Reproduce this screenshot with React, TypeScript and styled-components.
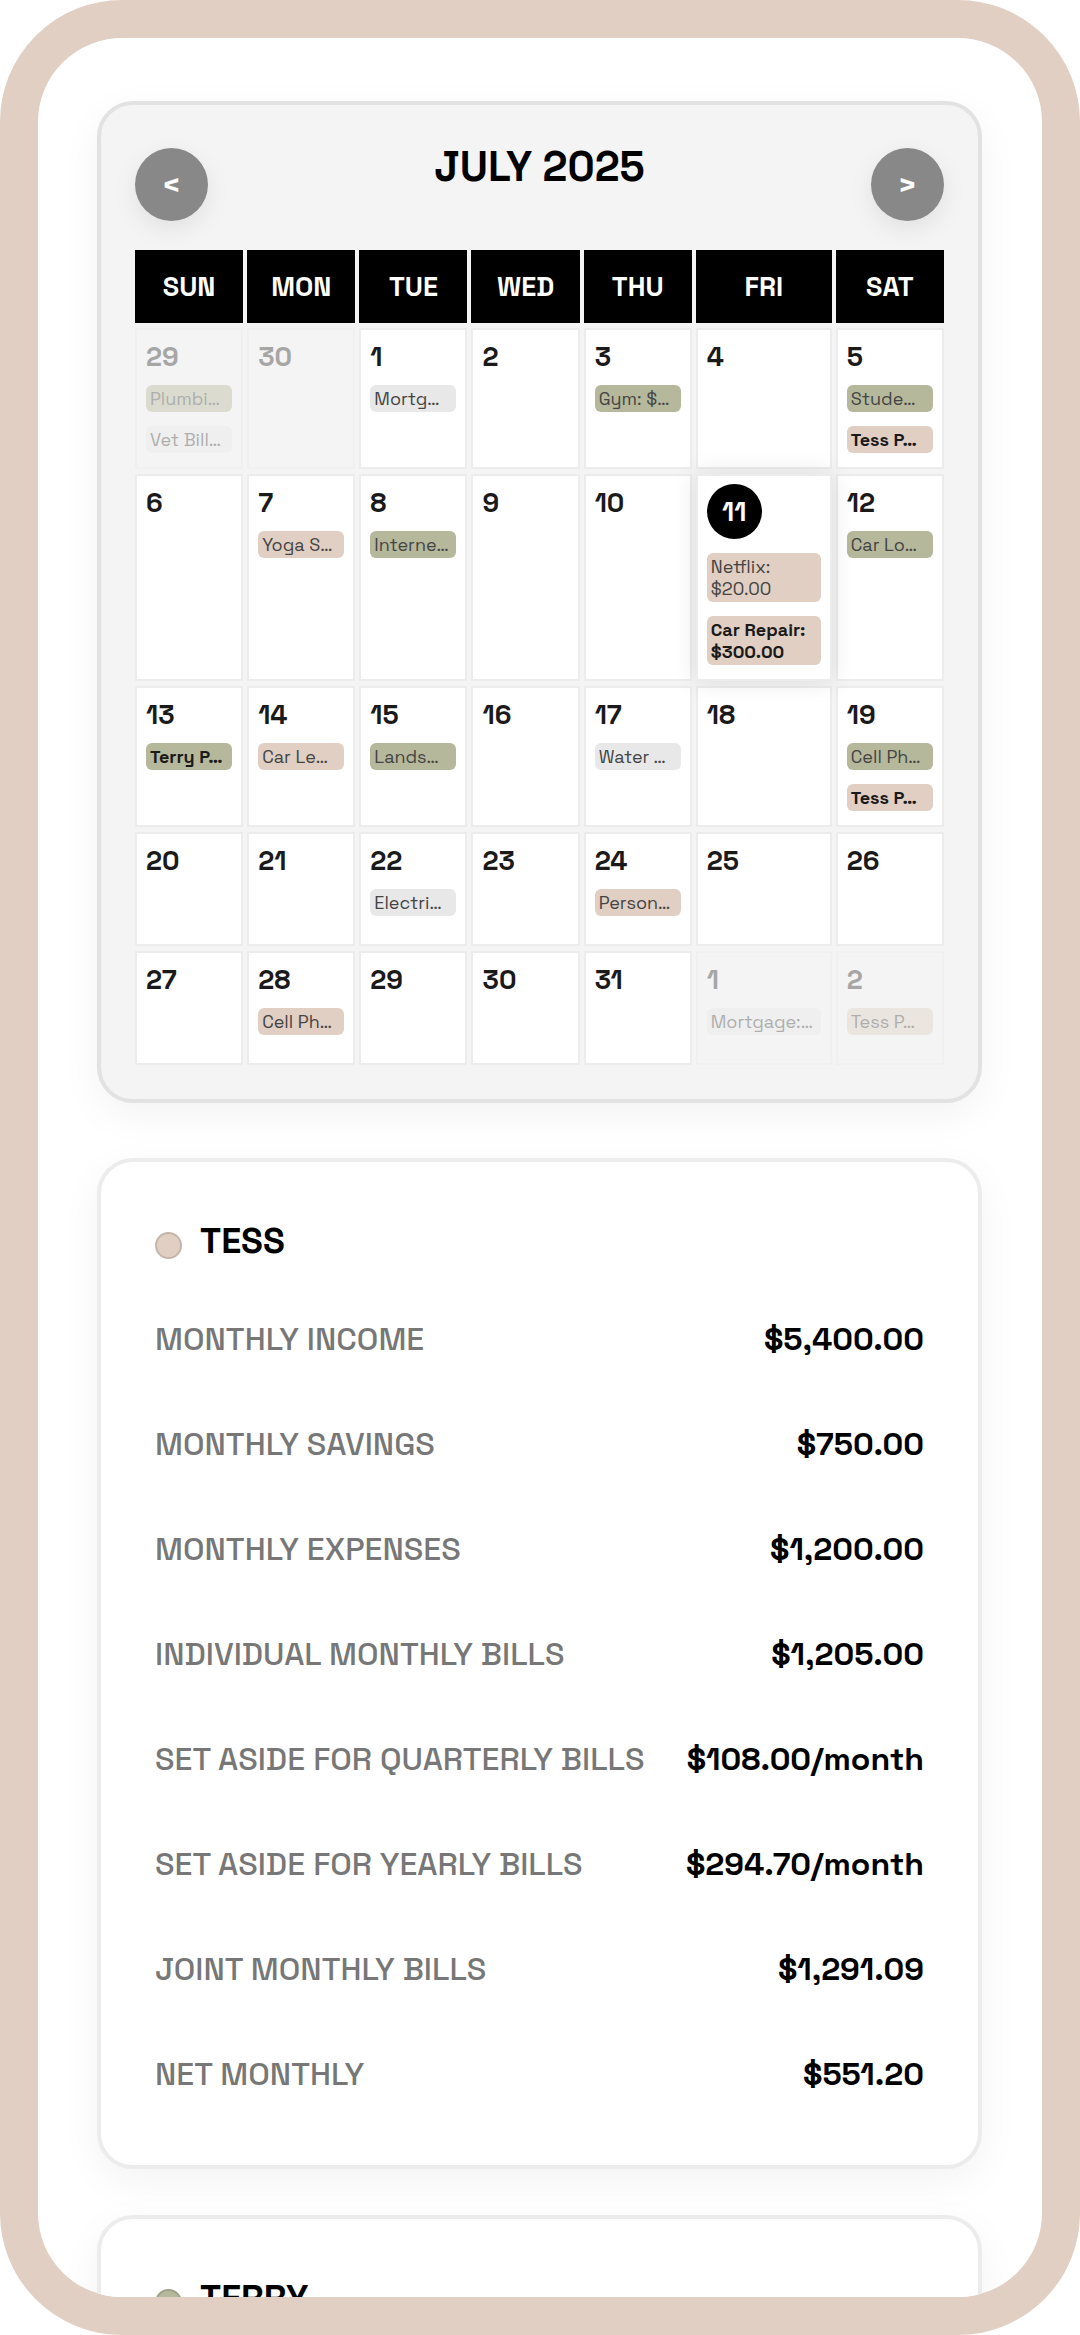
import React from "react";
import styled, { createGlobalStyle, css } from "styled-components";

const GlobalStyle = createGlobalStyle`
  *, *::before, *::after { box-sizing: border-box; }
  body {
    margin: 0;
    background: #ffffff;
    color: #000000;
    font-family: "Space Grotesk", Inter, "Liberation Sans", sans-serif;
  }
`;

type Owner = "tess" | "terry" | "joint";

const ownerColor: Record<Owner, string> = {
  tess: "#e0cfc2",
  terry: "#b6b89b",
  joint: "#e8e8e8",
};

const Frame = styled.div`
  height: 100vh;
  overflow: hidden;
  border: 38px solid #e0cfc2;
  border-radius: 122px;
  background: #ffffff;
`;

const Screen = styled.main`
  display: flex;
  flex-direction: column;
  padding: 63px 60px 0 59px;
`;

const cardBase = css`
  border: 4px solid #ececec;
  border-radius: 36px;
  background: #ffffff;
  box-shadow: 0 12px 40px rgba(0, 0, 0, 0.05);
`;

const CalendarCard = styled.section`
  ${cardBase}
  padding: 43px 34px 34px;
  margin-bottom: 55px;
  border-color: #e2e2e2;
  background: #f4f4f4;
`;

const CalendarHeader = styled.header`
  display: flex;
  align-items: flex-start;
  justify-content: space-between;
  margin-bottom: 29px;
`;

const MonthTitle = styled.h1`
  margin: 0;
  font-size: 42px;
  font-weight: 600;
  line-height: 38px;
`;

const NavButton = styled.button`
  display: flex;
  align-items: center;
  justify-content: center;
  width: 73px;
  height: 73px;
  padding: 0;
  border: 0;
  border-radius: 50%;
  background: #888888;
  color: #ffffff;
  font: inherit;
  font-size: 32px;
  font-weight: 700;
  box-shadow: 0 8px 24px rgba(0, 0, 0, 0.08);
  cursor: pointer;
`;

const TableWrap = styled.div`
  margin: -5px -4px;
`;

const MonthTable = styled.table`
  width: 100%;
  table-layout: fixed;
  border-collapse: separate;
  border-spacing: 4px 5px;
`;

const WideCol = styled.col`
  width: 136px;
`;

const DayName = styled.th`
  height: 73px;
  padding: 0;
  background: #000000;
  color: #ffffff;
  font-size: 27px;
  font-weight: 700;
`;

const DayCell = styled.td<{ $outside?: boolean; $today?: boolean }>`
  height: 114px;
  padding: 8px 9px 0;
  border: 2px solid #ececec;
  background: #ffffff;
  vertical-align: top;
  ${(p) =>
    p.$outside &&
    css`
      background: #f4f4f4;
      opacity: 0.4;
    `}
  ${(p) =>
    p.$today &&
    css`
      position: relative;
      z-index: 1;
      box-shadow: 0 0 24px rgba(0, 0, 0, 0.1);
    `}
`;

const DateNumber = styled.div<{ $today?: boolean; $outside?: boolean }>`
  margin-bottom: 9px;
  color: ${(p) => (p.$outside ? "#333333" : "#1a1a1a")};
  font-size: 27px;
  font-weight: 600;
  line-height: 38px;
  ${(p) =>
    p.$today &&
    css`
      width: 55px;
      height: 55px;
      margin-bottom: 14px;
      border-radius: 50%;
      background: #000000;
      color: #ffffff;
      line-height: 55px;
      text-align: center;
    `}
`;

const BillTag = styled.div<{ $owner: Owner; $strong?: boolean; $wrap?: boolean }>`
  margin-bottom: 14px;
  padding: 3px 4px 2px;
  overflow: hidden;
  border-radius: 6px;
  background: ${(p) => ownerColor[p.$owner]};
  color: ${(p) => (p.$strong ? "#1a1a1a" : "#444444")};
  font-size: 18px;
  font-weight: ${(p) => (p.$strong ? 600 : 400)};
  line-height: 22px;
  white-space: ${(p) => (p.$wrap ? "normal" : "nowrap")};
`;

const SummaryCard = styled.section`
  ${cardBase}
  padding: 61px 54px 39px;
  margin-bottom: 46px;
`;

const PersonHeading = styled.h2`
  display: flex;
  align-items: flex-end;
  gap: 18px;
  margin: 0 0 27px;
  font-size: 36px;
  font-weight: 600;
  line-height: 36px;
`;

const OwnerDot = styled.span<{ $owner: Owner }>`
  width: 27px;
  height: 27px;
  border: 2px solid rgba(0, 0, 0, 0.12);
  border-radius: 50%;
  background: ${(p) => ownerColor[p.$owner]};
`;

const Figures = styled.dl`
  margin: 0;
`;

const FigureRow = styled.div`
  display: flex;
  align-items: center;
  justify-content: space-between;
  height: 105px;
  font-size: 32px;
  white-space: nowrap;
`;

const FigureLabel = styled.dt`
  color: #777777;
  font-weight: 500;
`;

const FigureValue = styled.dd`
  margin: 0;
  font-weight: 600;
`;

interface Bill {
  text: string;
  owner: Owner;
  strong?: boolean;
}

interface Day {
  date: number;
  outside?: boolean;
  today?: boolean;
  bills?: Bill[];
}

const dayNames = ["SUN", "MON", "TUE", "WED", "THU", "FRI", "SAT"];

const weeks: Day[][] = [
  [
    {
      date: 29,
      outside: true,
      bills: [
        { text: "Plumbi…", owner: "terry" },
        { text: "Vet Bill…", owner: "joint" },
      ],
    },
    { date: 30, outside: true },
    { date: 1, bills: [{ text: "Mortg…", owner: "joint" }] },
    { date: 2 },
    { date: 3, bills: [{ text: "Gym: $…", owner: "terry" }] },
    { date: 4 },
    {
      date: 5,
      bills: [
        { text: "Stude…", owner: "terry" },
        { text: "Tess P…", owner: "tess", strong: true },
      ],
    },
  ],
  [
    { date: 6 },
    { date: 7, bills: [{ text: "Yoga S…", owner: "tess" }] },
    { date: 8, bills: [{ text: "Interne…", owner: "terry" }] },
    { date: 9 },
    { date: 10 },
    {
      date: 11,
      today: true,
      bills: [
        { text: "Netflix: $20.00", owner: "tess" },
        { text: "Car Repair: $300.00", owner: "tess", strong: true },
      ],
    },
    { date: 12, bills: [{ text: "Car Lo…", owner: "terry" }] },
  ],
  [
    { date: 13, bills: [{ text: "Terry P…", owner: "terry", strong: true }] },
    { date: 14, bills: [{ text: "Car Le…", owner: "tess" }] },
    { date: 15, bills: [{ text: "Lands…", owner: "terry" }] },
    { date: 16 },
    { date: 17, bills: [{ text: "Water …", owner: "joint" }] },
    { date: 18 },
    {
      date: 19,
      bills: [
        { text: "Cell Ph…", owner: "terry" },
        { text: "Tess P…", owner: "tess", strong: true },
      ],
    },
  ],
  [
    { date: 20 },
    { date: 21 },
    { date: 22, bills: [{ text: "Electri…", owner: "joint" }] },
    { date: 23 },
    { date: 24, bills: [{ text: "Person…", owner: "tess" }] },
    { date: 25 },
    { date: 26 },
  ],
  [
    { date: 27 },
    { date: 28, bills: [{ text: "Cell Ph…", owner: "tess" }] },
    { date: 29 },
    { date: 30 },
    { date: 31 },
    { date: 1, outside: true, bills: [{ text: "Mortgage:…", owner: "joint" }] },
    { date: 2, outside: true, bills: [{ text: "Tess P…", owner: "tess" }] },
  ],
];

const tessFigures: [string, string][] = [
  ["MONTHLY INCOME", "$5,400.00"],
  ["MONTHLY SAVINGS", "$750.00"],
  ["MONTHLY EXPENSES", "$1,200.00"],
  ["INDIVIDUAL MONTHLY BILLS", "$1,205.00"],
  ["SET ASIDE FOR QUARTERLY BILLS", "$108.00/month"],
  ["SET ASIDE FOR YEARLY BILLS", "$294.70/month"],
  ["JOINT MONTHLY BILLS", "$1,291.09"],
  ["NET MONTHLY", "$551.20"],
];

function CalendarDay({ date, outside, today, bills = [] }: Day) {
  return (
    <DayCell $outside={outside} $today={today}>
      <DateNumber $today={today} $outside={outside}>
        {date}
      </DateNumber>
      {bills.map((bill) => (
        <BillTag key={bill.text} $owner={bill.owner} $strong={bill.strong} $wrap={today}>
          {bill.text}
        </BillTag>
      ))}
    </DayCell>
  );
}

function Calendar() {
  return (
    <CalendarCard>
      <CalendarHeader>
        <NavButton type="button">&lt;</NavButton>
        <MonthTitle>JULY 2025</MonthTitle>
        <NavButton type="button">&gt;</NavButton>
      </CalendarHeader>
      <TableWrap>
        <MonthTable>
          <colgroup>
            <col span={5} />
            <WideCol />
            <col />
          </colgroup>
          <thead>
            <tr>
              {dayNames.map((name) => (
                <DayName key={name} scope="col">
                  {name}
                </DayName>
              ))}
            </tr>
          </thead>
          <tbody>
            {weeks.map((week, index) => (
              <tr key={index}>
                {week.map((day) => (
                  <CalendarDay key={day.date} {...day} />
                ))}
              </tr>
            ))}
          </tbody>
        </MonthTable>
      </TableWrap>
    </CalendarCard>
  );
}

interface SummaryProps {
  name: string;
  owner: Owner;
  figures?: [string, string][];
}

function Summary({ name, owner, figures = [] }: SummaryProps) {
  return (
    <SummaryCard>
      <PersonHeading>
        <OwnerDot $owner={owner} />
        {name}
      </PersonHeading>
      <Figures>
        {figures.map(([label, value]) => (
          <FigureRow key={label}>
            <FigureLabel>{label}</FigureLabel>
            <FigureValue>{value}</FigureValue>
          </FigureRow>
        ))}
      </Figures>
    </SummaryCard>
  );
}

export default function App() {
  return (
    <>
      <GlobalStyle />
      <Frame>
        <Screen>
          <Calendar />
          <Summary name="TESS" owner="tess" figures={tessFigures} />
          <Summary name="TERRY" owner="terry" />
        </Screen>
      </Frame>
    </>
  );
}
